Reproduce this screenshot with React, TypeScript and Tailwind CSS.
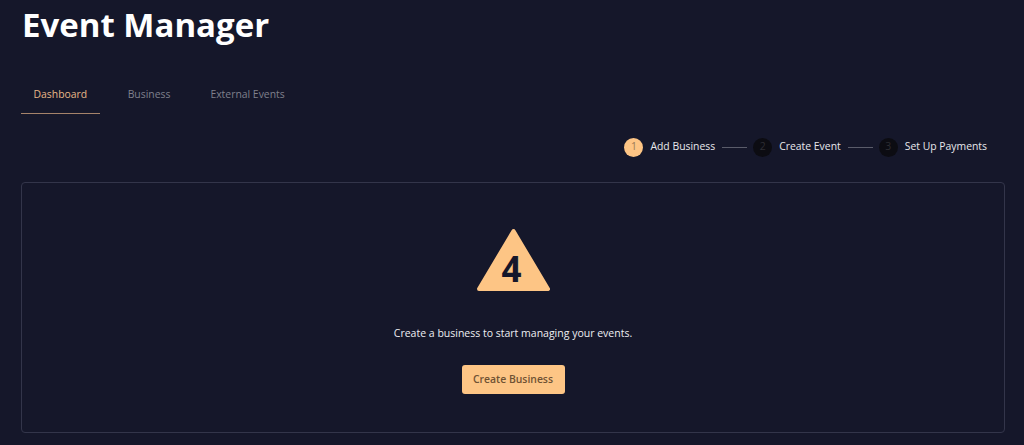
const tabs = ['Dashboard', 'Business', 'External Events'];
const steps = ['Add Business', 'Create Event', 'Set Up Payments'];

const App = () => {
    return (
        <div className="h-[445px] w-[1024px] overflow-hidden bg-[#15172a] pl-[21px] pr-[19px] font-['Open_Sans','Noto_Sans',sans-serif] text-white">
            {/* Title */}
            <h1 className="h-[49px] pl-px text-[33px] font-bold leading-[49px] text-white">Event Manager</h1>

            {/* Tabs */}
            <div className="mt-[26px] flex gap-4">
                {tabs.map((tab, i) => (
                    <div
                        key={tab}
                        className={
                            i === 0
                                ? 'h-[39px] border-b border-[#a5836a] px-[12.5px] text-[10.4px] leading-[38px] text-[#e8b888]'
                                : 'h-[39px] px-3 text-[10.4px] leading-[38px] text-[#7f808c]'
                        }
                    >
                        {tab}
                    </div>
                ))}
            </div>

            {/* Stepper */}
            <div className="mt-[23px] flex h-[20px] items-center justify-end pr-[18px]">
                {steps.map((step, i) => (
                    <div key={step} className="flex items-center">
                        {i > 0 && <div className="ml-[7px] mr-[6px] h-px w-[25px] bg-[#5a5c6a]" />}
                        <div
                            className={
                                i === 0
                                    ? 'flex h-[19px] w-[19px] items-center justify-center rounded-full bg-[#fdc585] text-[10.4px] text-[#9a7a55]'
                                    : 'flex h-[19px] w-[19px] items-center justify-center rounded-full bg-[#0c0c12] text-[10.4px] text-[#2e2e34]'
                            }
                        >
                            {i + 1}
                        </div>
                        <span className="ml-[7px] text-[10.4px] text-[#e8e8ec]">{step}</span>
                    </div>
                ))}
            </div>

            {/* Empty state card */}
            <div className="mt-[25px] flex h-[251px] flex-col items-center rounded border border-[#33354a]">
                <svg width="76" height="64" viewBox="0 0 76 64" className="mt-[45px]">
                    <path d="M38.5 3 L73 61 H4 Z" fill="#fdc585" stroke="#fdc585" strokeWidth="4" strokeLinejoin="round" />
                    <text x="36.5" y="54" textAnchor="middle" fontSize="35" fontWeight="700" fill="#15172a" fontFamily="Open Sans, sans-serif">4</text>
                </svg>
                <p className="mt-[31px] text-[10.5px] leading-[20px] text-[#eeeef2]">Create a business to start managing your events.</p>
                <button className="mt-[22px] h-[29px] w-[103px] rounded-[3px] bg-[#fdc585] text-[10.4px] font-semibold text-[#6f5233]">Create Business</button>
            </div>
        </div>
    );
};

export default App;
